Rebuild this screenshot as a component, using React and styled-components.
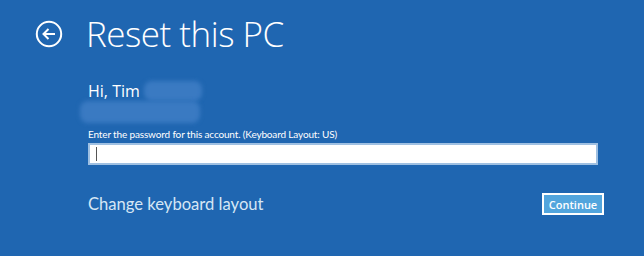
import React from "react";
import styled, { createGlobalStyle } from "styled-components";

const GlobalStyle = createGlobalStyle`
  html, body {
    margin: 0;
    padding: 0;
    background: #1f66b1;
  }
  body {
    font-family: "Open Sans", "Noto Sans", sans-serif;
    color: #ffffff;
  }
`;

export default function App() {
  return (
    <>
      <GlobalStyle />
      <Page>
        <Header>
          <BackButton aria-label="Back">
            <svg width="28" height="28" viewBox="0 0 28 28">
              <circle cx="14" cy="14" r="12.2" fill="none" stroke="#fff" strokeWidth="2" />
              <path d="M20 14H8.5M13.5 9l-5 5 5 5" fill="none" stroke="#fff" strokeWidth="2" />
            </svg>
          </BackButton>
          <Title>Reset this PC</Title>
        </Header>
        <Content>
          <Greeting>
            Hi, Tim
            <Smudge $w={58} $h={20} />
          </Greeting>
          <SmudgeRow>
            <Smudge $w={120} $h={22} />
          </SmudgeRow>
          <Hint>Enter the password for this account. (Keyboard Layout: US)</Hint>
          <PasswordBox>
            <Caret />
          </PasswordBox>
          <Footer>
            <LinkText>Change keyboard layout</LinkText>
            <ContinueButton>Continue</ContinueButton>
          </Footer>
        </Content>
      </Page>
    </>
  );
}

const Page = styled.div`
  width: 644px;
  height: 256px;
  background: #1f66b1;
  overflow: hidden;
`;

const Header = styled.div`
  display: flex;
  align-items: center;
  gap: 23px;
  padding: 16px 0 0 35px;
  height: 36px;
`;

const BackButton = styled.div`
  width: 28px;
  height: 28px;
  display: flex;
`;

const Title = styled.h1`
  margin: 0;
  font-family: "Open Sans", sans-serif;
  font-weight: 300;
  font-size: 35px;
  line-height: 36px;
  letter-spacing: -0.5px;
  color: #ffffff;
`;

const Content = styled.div`
  display: flex;
  flex-direction: column;
  padding: 0 46px 0 88px;
`;

const Greeting = styled.div`
  display: flex;
  align-items: center;
  gap: 4px;
  margin-top: 29px;
  height: 20px;
  font-size: 16px;
  font-weight: 400;
  color: #ffffff;
`;

const SmudgeRow = styled.div`
  display: flex;
  margin-left: -8px;
  height: 22px;
`;

const Smudge = styled.span`
  display: block;
  width: ${(p) => p.$w}px;
  height: ${(p) => p.$h}px;
  border-radius: 8px;
  background: #3a7ac2;
  filter: blur(2px);
`;

const Hint = styled.div`
  margin-top: 4px;
  font-family: "Lato", sans-serif;
  font-size: 10px;
  letter-spacing: -0.15px;
  line-height: 14px;
  color: #ffffff;
`;

const PasswordBox = styled.div`
  margin-top: 2px;
  width: 500px;
  height: 18px;
  padding: 0 0 0 6px;
  background: #ffffff;
  border: 2px solid #9fc0e2;
  display: flex;
  align-items: center;
`;

const Caret = styled.span`
  width: 1px;
  height: 14px;
  background: #555;
`;

const Footer = styled.div`
  display: flex;
  align-items: center;
  justify-content: space-between;
  margin-top: 28px;
`;

const LinkText = styled.div`
  font-family: "Lato", sans-serif;
  font-size: 16.6px;
  color: #d6e6f5;
`;

const ContinueButton = styled.button`
  width: 62px;
  height: 22px;
  margin-right: -6px;
  padding: 0;
  border: 2px solid #ffffff;
  background: #52a5dd;
  color: #ffffff;
  font-family: "Open Sans", sans-serif;
  font-weight: 600;
  font-size: 11px;
  cursor: pointer;
`;
